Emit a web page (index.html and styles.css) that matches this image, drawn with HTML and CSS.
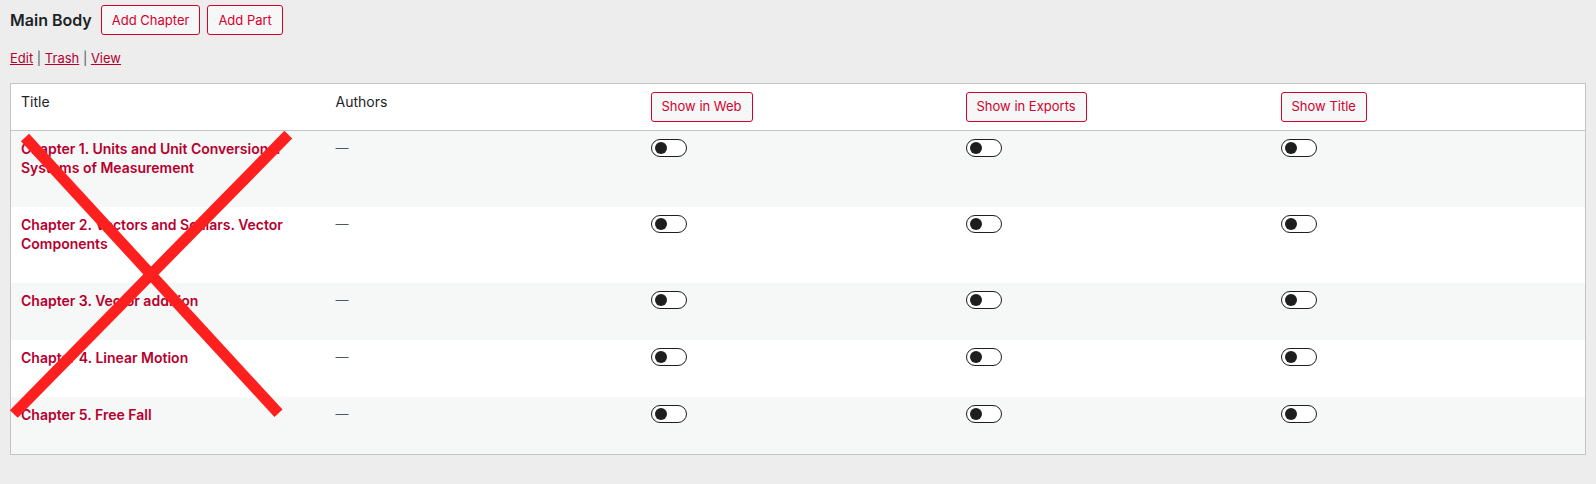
FILE: index.html
```html
<!DOCTYPE html>
<html lang="en">
<head>
<meta charset="utf-8">
<title>Main Body</title>
<link rel="stylesheet" href="styles.css">
</head>
<body>
<div class="page">
  <div class="heading-row">
    <h2 class="heading">Main Body</h2>
    <a class="btn" href="#">Add Chapter</a>
    <a class="btn" href="#">Add Part</a>
  </div>
  <div class="part-actions">
    <a href="#">Edit</a> <span class="sep">|</span> <a href="#">Trash</a> <span class="sep">|</span> <a href="#">View</a>
  </div>
  <table class="list">
    <thead>
      <tr>
        <th class="col-title">Title</th>
        <th>Authors</th>
        <th><button class="btn" type="button">Show in Web</button></th>
        <th><button class="btn" type="button">Show in Exports</button></th>
        <th><button class="btn" type="button">Show Title</button></th>
      </tr>
    </thead>
    <tbody>
      <tr class="alt">
        <td class="col-title"><a class="row-title" href="#">Chapter 1. Units and Unit Conversions. Systems of Measurement</a><div class="row-actions"></div></td>
        <td>—</td>
        <td><span class="toggle"></span></td>
        <td><span class="toggle"></span></td>
        <td><span class="toggle"></span></td>
      </tr>
      <tr>
        <td class="col-title"><a class="row-title" href="#">Chapter 2. Vectors and Scalars. Vector Components</a><div class="row-actions"></div></td>
        <td>—</td>
        <td><span class="toggle"></span></td>
        <td><span class="toggle"></span></td>
        <td><span class="toggle"></span></td>
      </tr>
      <tr class="alt">
        <td class="col-title"><a class="row-title" href="#">Chapter 3. Vector addition</a><div class="row-actions"></div></td>
        <td>—</td>
        <td><span class="toggle"></span></td>
        <td><span class="toggle"></span></td>
        <td><span class="toggle"></span></td>
      </tr>
      <tr>
        <td class="col-title"><a class="row-title" href="#">Chapter 4. Linear Motion</a><div class="row-actions"></div></td>
        <td>—</td>
        <td><span class="toggle"></span></td>
        <td><span class="toggle"></span></td>
        <td><span class="toggle"></span></td>
      </tr>
      <tr class="alt">
        <td class="col-title"><a class="row-title" href="#">Chapter 5. Free Fall</a><div class="row-actions"></div></td>
        <td>—</td>
        <td><span class="toggle"></span></td>
        <td><span class="toggle"></span></td>
        <td><span class="toggle"></span></td>
      </tr>
    </tbody>
  </table>
</div>
<svg class="cross" width="1596" height="484" viewBox="0 0 1596 484" aria-hidden="true">
  <line x1="25" y1="137.5" x2="278.5" y2="413.3" stroke="#fe1f1f" stroke-width="11"/>
  <line x1="288.3" y1="134.7" x2="13.8" y2="414" stroke="#fe1f1f" stroke-width="11"/>
</svg>
</body>
</html>
```

FILE: styles.css
```css
html, body {
  margin: 0;
  padding: 0;
  background: #ededed;
  height: 100%;
}
body {
  font-family: Inter, "Liberation Sans", sans-serif;
  color: #1d2327;
  font-size: 13px;
  line-height: 1.5;
  position: relative;
  overflow: hidden;
}
.page {
  padding: 5px 10px 0 10px;
}
.heading-row {
  display: flex;
  align-items: center;
  gap: 7px;
  height: 30px;
}
.heading {
  margin: 0 2px 0 0;
  font-size: 16px;
  font-weight: 600;
  color: #1d2327;
}
.btn {
  display: inline-flex;
  align-items: center;
  box-sizing: border-box;
  height: 30px;
  padding: 0 10px;
  border: 1px solid #d4002d;
  border-radius: 3px;
  background: #f6f7f7;
  color: #d4002d;
  font-family: inherit;
  font-size: 13px;
  text-decoration: none;
  line-height: 1;
  white-space: nowrap;
}
.part-actions {
  margin-top: 14px;
  font-size: 13px;
  line-height: 19.5px;
  color: #50575e;
}
.part-actions a {
  color: #b5002d;
  text-decoration: underline;
}
.list {
  margin-top: 14px;
  width: 100%;
  table-layout: fixed;
  border-collapse: collapse;
  border: 1px solid #c3c4c7;
  background: #fff;
}
.list th {
  text-align: left;
  vertical-align: top;
  font-weight: 400;
  font-size: 14px;
  line-height: 19.6px;
  padding: 8px 10px;
  border-bottom: 1px solid #c3c4c7;
  color: #1d2327;
}
.list td {
  vertical-align: top;
  padding: 8px 10px;
  font-size: 13px;
  line-height: 19.5px;
  color: #50575e;
}
.list tr.alt td {
  background: #f6f7f7;
}
.row-title {
  display: block;
  font-size: 14px;
  line-height: 19.5px;
  font-weight: 600;
  color: #b5002d;
  text-decoration: none;
}
.row-actions {
  height: 21.4px;
}
.toggle {
  display: block;
  position: relative;
  box-sizing: border-box;
  width: 36px;
  height: 18px;
  border: 1px solid #1e1e1e;
  border-radius: 9px;
  background: #fff;
}
.toggle::before {
  content: "";
  position: absolute;
  left: 3px;
  top: 2px;
  width: 12px;
  height: 12px;
  border-radius: 50%;
  background: #1e1e1e;
}
.cross {
  position: absolute;
  left: 0;
  top: 0;
  pointer-events: none;
}
```
